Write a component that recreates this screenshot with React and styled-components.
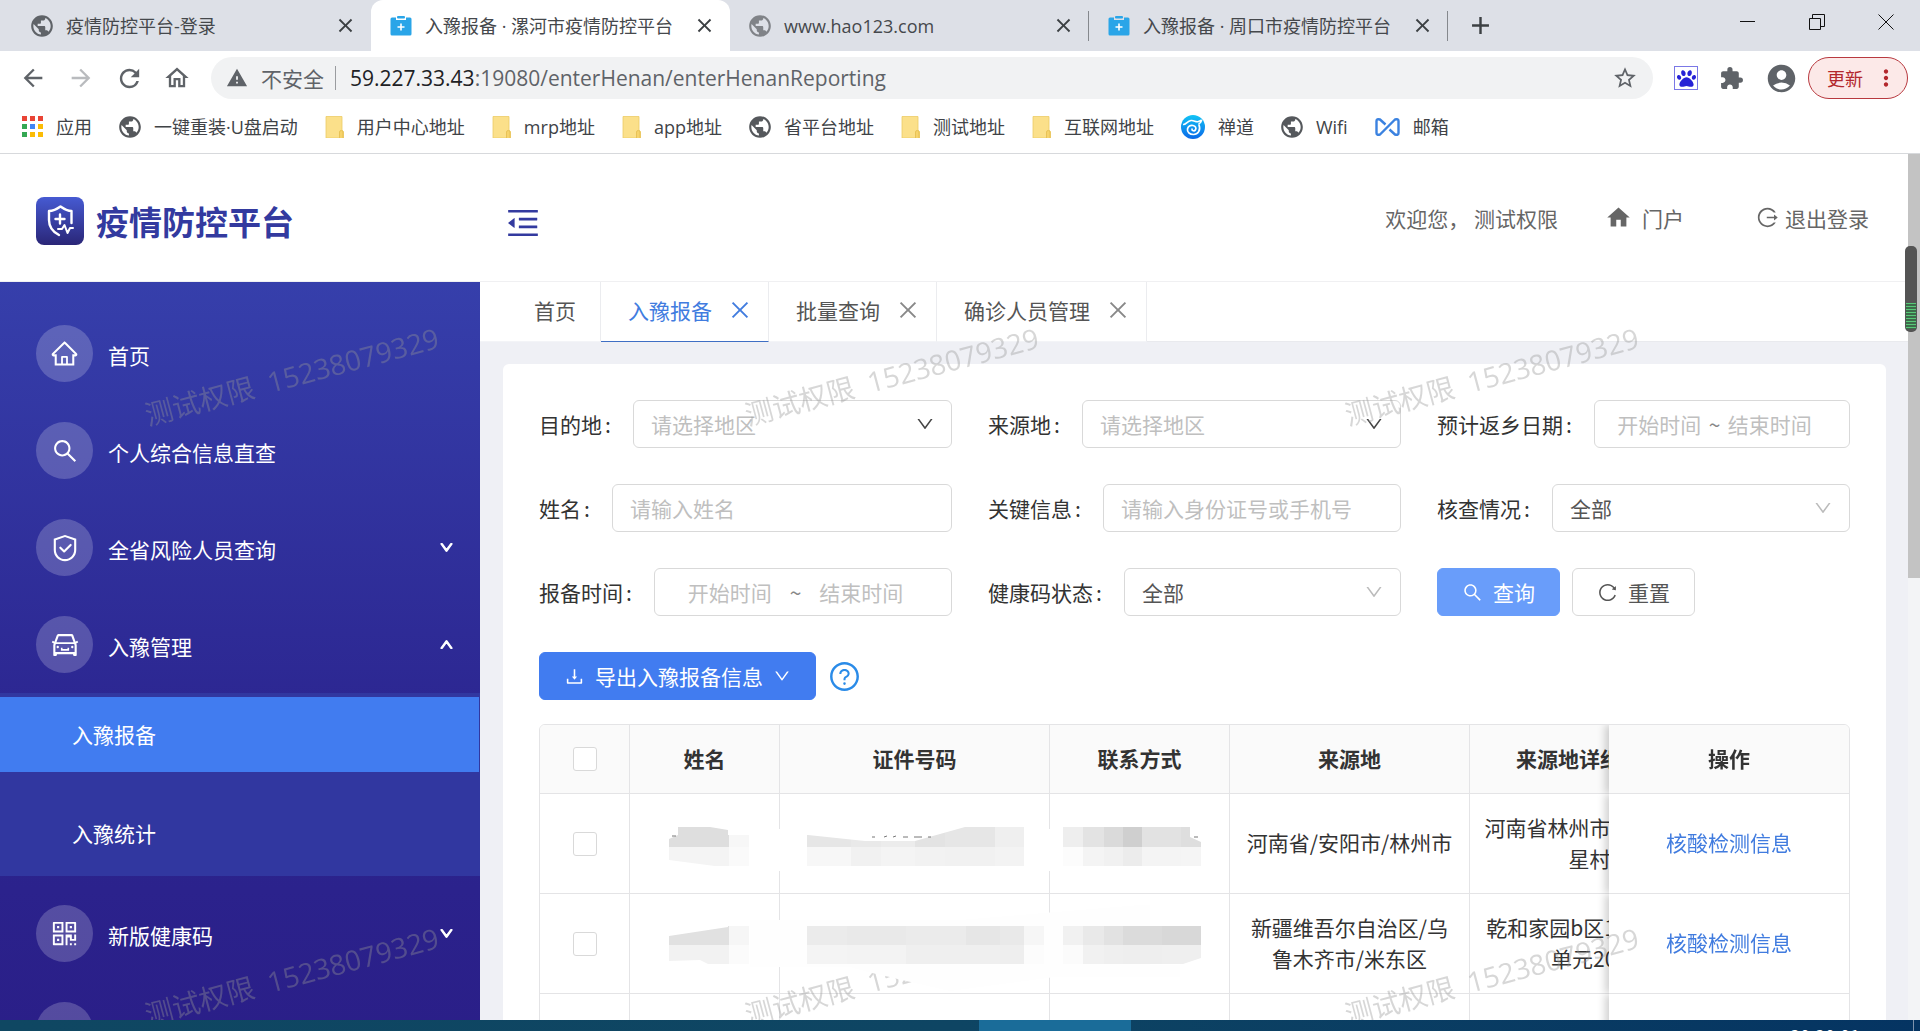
import styled, { createGlobalStyle } from 'styled-components';
import {
    MdArrowBack, MdArrowForward, MdRefresh, MdOutlineHome, MdWarning, MdStarBorder,
    MdExtension, MdAccountCircle, MdMoreVert, MdPublic, MdClose, MdAdd, MdHome,
} from 'react-icons/md';
import { FaPaw } from 'react-icons/fa';
import {
    AiOutlineHome, AiOutlineSearch, AiOutlineSafety, AiOutlineCar, AiOutlineQrcode,
    AiOutlineMenuFold, AiOutlineLogout, AiOutlineClose, AiOutlineDown, AiOutlineUp,
    AiOutlineReload, AiOutlineDownload, AiOutlineQuestionCircle, AiOutlineIdcard,
} from 'react-icons/ai';

const GlobalStyle = createGlobalStyle`
* {
    box-sizing: border-box;
}

body {
    margin: 0;
    color: #333;
    font-family: "Noto Sans CJK SC", "Noto Sans", sans-serif;
    font-size: 21px;
}

button, input, select {
    font: inherit;
    color: inherit;
}

button {
    display: flex;
    align-items: center;
    padding: 0;
    border: 0;
    background: none;
    cursor: pointer;
}

a {
    color: inherit;
    text-decoration: none;
}

svg {
    flex-shrink: 0;
}
`

const Screen = styled.div`
    display: flex;
    flex-direction: column;
    height: 100vh;
    overflow: hidden;
`

/* browser */

const TabStrip = styled.div`
    display: flex;
    align-items: stretch;
    height: 51px;
    flex-shrink: 0;
    padding-left: 12px;
    background: #dde0e7;
    font-family: "Open Sans", "Noto Sans CJK SC", sans-serif;
    font-size: 18px;
    line-height: 26px;
    color: #45484c;
`

const BrowserTab = styled.div`
    position: relative;
    display: flex;
    align-items: center;
    gap: 13px;
    width: 359px;
    padding: 0 14px 0 19px;
    background: ${props => props.$active ? '#fff' : 'transparent'};
    border-radius: 12px 12px 0 0;

span {
    flex: 1;
    white-space: nowrap;
}

&::after {
    content: '';
    position: absolute;
    right: 0;
    top: 11px;
    height: 30px;
    width: ${props => props.$divider ? '1px' : '0'};
    background: #85888d;
}
`

const TabClose = styled.button`
    color: #3c4043;
`

const NewTab = styled.button`
    padding: 0 0 1px 18px;
    color: #3c4043;
`

const WindowButtons = styled.div`
    display: flex;
    gap: 53px;
    margin-left: auto;
    padding: 0 26px 8px 0;
    color: #111;
`

const Toolbar = styled.div`
    display: flex;
    align-items: center;
    height: 54px;
    flex-shrink: 0;
    padding: 0 12px 0 19px;
    background: #fff;
    color: #5f6368;
`

const NavButton = styled.button`
    width: 48px;
    color: ${props => props.$faded ? '#b9bbbe' : '#5f6368'};
`

const Omnibox = styled.div`
    display: flex;
    align-items: center;
    flex: 1;
    height: 42px;
    padding: 0 15px;
    border-radius: 21px;
    background: #f1f2f3;
`

const Insecure = styled.span`
    margin: 0 11px 0 13px;
    line-height: 30px;
`

const Address = styled.div`
    flex: 1;
    padding-left: 14px;
    border-left: 1px solid #9a9c9f;
    font-family: "Open Sans", "Noto Sans", sans-serif;
    font-size: 21px;
    line-height: 24px;

b {
    font-weight: 400;
    color: #202124;
}
`

const Extensions = styled.div`
    display: flex;
    align-items: center;
    gap: 21px;
    padding: 0 10px 0 21px;
`

const PawBox = styled.button`
    justify-content: center;
    width: 24px;
    height: 24px;
    border: 1px solid #7b78e6;
    color: #2622d6;
`

const Update = styled.button`
    justify-content: space-between;
    width: 100px;
    height: 42px;
    padding: 0 8px 0 18px;
    border: 1px solid #b8393f;
    border-radius: 21px;
    background: #fce9e8;
    color: #b3282d;
    font-size: 18px;
`

const Bookmarks = styled.nav`
    display: flex;
    align-items: center;
    gap: 27px;
    height: 49px;
    flex-shrink: 0;
    padding: 0 22px 5px;
    border-bottom: 1px solid #d7d9dc;
    background: #fff;
    color: #404347;
    font-family: "Open Sans", "Noto Sans CJK SC", sans-serif;
    font-size: 18px;
    line-height: 26px;

a {
    display: flex;
    align-items: center;
    gap: 13px;
    white-space: nowrap;
}
`

const Globe = styled(MdPublic)`
    margin: 0 -2px;
`

/* page */

const Viewport = styled.div`
    position: relative;
    display: flex;
    flex: 1;
    min-height: 0;
    overflow: hidden;
    background: #fff;
`

const Page = styled.div`
    flex: 1;
    min-width: 0;
`

const Scrollbar = styled.div`
    width: 12px;
    background: #f3f4f6;

&::before {
    content: '';
    display: block;
    height: 424px;
    background: #c3c3c3;
}
`

const Header = styled.header`
    display: flex;
    align-items: center;
    height: 128px;
    padding-right: 39px;
    border-bottom: 1px solid #f0f0f2;
    color: #666;
`

const Brand = styled.div`
    display: flex;
    align-items: center;
    gap: 12px;
    width: 504px;
    padding: 6px 0 0 36px;

h1 {
    margin: 0;
    font-size: 33px;
    line-height: 48px;
    color: #333a9f;
}
`

const FoldButton = styled.button`
    padding-top: 10px;
    color: #333a9f;
`

const UserArea = styled.div`
    display: flex;
    align-items: center;
    margin-left: auto;
    white-space: pre;
`

const HeaderLink = styled.a`
    display: flex;
    align-items: center;
    gap: ${props => props.$gap};
    margin-left: ${props => props.$left};
`

const Body = styled.div`
    display: flex;
    height: 100%;
`

const Sidebar = styled.aside`
    width: 480px;
    flex-shrink: 0;
    height: 780px;
    padding-top: 23px;
    background: linear-gradient(#363fab, #2c2691 56%, #2a1e87);
    color: #fff;
`

const MenuItem = styled.button`
    width: 100%;
    height: 97px;
    padding: 0 26px 0 36px;
    gap: 15px;
    text-align: left;

span {
    flex: 1;
    padding-top: 3px;
}
`

const MenuIcon = styled.i`
    display: flex;
    align-items: center;
    justify-content: center;
    width: 57px;
    height: 57px;
    border-radius: 50%;
    background: rgba(255, 255, 255, 0.2);
`

const SubMenu = styled.div`
    display: flex;
    flex-direction: column;
    gap: 24px;
    margin-bottom: 9px;
    padding: 4px 1px 5px 0;
    background: #3137a0;
`

const SubItem = styled.a`
    height: 75px;
    padding-left: 72px;
    line-height: 74px;
    background: ${props => props.$active ? '#417cf0' : 'transparent'};
`

const Content = styled.main`
    flex: 1;
    min-width: 0;
    background: #eff0f5;
`

const PageTabs = styled.nav`
    display: flex;
    height: 60px;
    background: #fff;
    border-bottom: 1px solid #e9eaee;
`

const PageTab = styled.div`
    display: flex;
    align-items: center;
    gap: 16px;
    height: 60px;
    padding: ${props => props.$home ? '0 24px 3px 54px' : '0 16px 3px 27px'};
    border-right: 1px solid #ebecef;
    border-bottom: 1px solid ${props => props.$active ? '#3f6fc4' : '#f3f4f7'};
    color: ${props => props.$active ? '#417cdf' : '#555'};

button {
    color: ${props => props.$active ? '#417cdf' : '#888'};
}
`

const Card = styled.section`
    margin: 22px 22px 0 23px;
    padding: 36px;
    border-radius: 6px;
    background: #fff;
    min-height: 720px;
`

const Filters = styled.form`
    display: grid;
    grid-template-columns: repeat(3, 1fr);
    gap: 36px;
`

const Field = styled.div`
    display: flex;
    align-items: center;
    height: 48px;
    min-width: 0;

label {
    flex-shrink: 0;
    color: #333;
}
`

const Colon = styled.span`
    display: inline-block;
    width: 31px;
    padding-left: 3px;
`

const TextInput = styled.input`
    flex: 1;
    min-width: 0;
    height: 48px;
    padding: 0 17px;
    border: 1px solid #d9d9d9;
    border-radius: 6px;
    background: #fff;

&::placeholder {
    color: #bfbfbf;
    opacity: 1;
}
`

const SelectBox = styled.div`
    display: flex;
    align-items: center;
    flex: 1;
    min-width: 0;
    height: 48px;
    padding-right: 16px;
    border: 1px solid #d9d9d9;
    border-radius: 6px;
    color: ${props => props.$dark ? '#444' : '#bbb'};

select {
    flex: 1;
    height: 46px;
    padding: 0 0 0 17px;
    border: 0;
    appearance: none;
    background: none;
    color: ${props => props.$dark ? '#bfbfbf' : '#555'};
}
`

const RangeBox = styled.div`
    display: flex;
    align-items: center;
    flex: 1;
    min-width: 0;
    height: 48px;
    padding: 0 34px 0 19px;
    border: 1px solid #d9d9d9;
    border-radius: 6px;

span {
    width: 20px;
    text-align: center;
    color: #888;
}

input {
    flex: 1;
    min-width: 0;
    padding: 0;
    border: 0;
    text-align: center;
}

input::placeholder {
    color: #bfbfbf;
    opacity: 1;
}
`

const Button = styled.button`
    height: 48px;
    gap: 10px;
    padding: 0 24px;
    margin-right: 12px;
    border: 1px solid ${props => props.$bg ? props.$bg : '#d9d9d9'};
    border-radius: 6px;
    background: ${props => props.$bg || '#fff'};
    color: ${props => props.$bg ? '#fff' : '#555'};
    white-space: nowrap;
`

const Actions = styled.div`
    display: flex;
    align-items: center;
    margin: 36px 0 24px;
`

const HelpButton = styled.button`
    color: #2a8be8;
`

const TableWrap = styled.div`
    position: relative;
    overflow: hidden;
    border: 1px solid #e4e4e6;
    border-radius: 6px 6px 0 0;
`

const Table = styled.table`
    table-layout: fixed;
    width: 1410px;
    border-collapse: separate;
    border-spacing: 0;
    line-height: 31px;

th, td {
    height: 100px;
    padding: 0 14px 2px;
    border-right: 1px solid #e4e4e6;
    border-bottom: 1px solid #e4e4e6;
    background: #fff;
    text-align: center;
}

th {
    height: 69px;
    background: #fafafa;
    font-weight: 700;
}

th:last-child, td:last-child {
    position: sticky;
    right: 0;
    border-right: 0;
    box-shadow: -4px 0 8px rgba(0, 0, 0, 0.18);
    clip-path: inset(0 0 0 -12px);
}

td a {
    color: #417cdf;
}
`

const Check = styled.input`
    display: block;
    width: 24px;
    height: 24px;
    margin: 2px auto 0;
    appearance: none;
    border: 1px solid #d9d9d9;
    border-radius: 3px;
    background: #fff;
`

const Smudges = styled.svg`
    position: absolute;
    left: 120px;
    top: 90px;
    z-index: 2;
`

const Watermarks = styled.div`
    position: absolute;
    inset: -79px 12px 0 -9px;
    z-index: 1;
    display: grid;
    grid-template-columns: repeat(auto-fill, 600px);
    grid-auto-rows: 600px;
    place-items: center;
    overflow: hidden;
    pointer-events: none;
    color: rgba(150, 150, 150, 0.38);
    font-family: "Open Sans", "Noto Sans CJK SC", sans-serif;
    font-size: 28px;

span {
    transform: rotate(-15deg);
    white-space: pre;
}
`

const Meter = styled.div`
    position: absolute;
    right: 3px;
    top: 92px;
    width: 12px;
    height: 86px;
    padding: 57px 1px 3px;
    border-radius: 5px;
    background: #545454;

&::before {
    content: '';
    display: block;
    height: 100%;
    background: repeating-linear-gradient(#58c878 0 1px, #3d6b4a 1px 3px);
}
`

const Taskbar = styled.footer`
    display: flex;
    justify-content: flex-end;
    height: 11px;
    flex-shrink: 0;
    overflow: hidden;
    background: linear-gradient(90deg, #0f4762, #0e4563 50%, #053462);
    color: #fff;
    font-size: 18px;
    line-height: 26px;

span {
    padding: 2px 53px 0 0;
}

i {
    width: 1px;
    margin-right: 6px;
    background: #7e93ad;
}
`

const TaskWindow = styled.div`
    width: 152px;
    margin-right: auto;
    margin-left: 51%;
    background: #1a6c99;
`

const ClipboardIcon = () => (
    <svg width="22" height="20" viewBox="0 0 22 20">
        <path d="M2 1.5h4v2.5h10V1.5h4a1.5 1.5 0 0 1 1.5 1.5v15a1.5 1.5 0 0 1-1.5 1.5H2A1.5 1.5 0 0 1 .5 18V3A1.5 1.5 0 0 1 2 1.5z" fill="#2aa5e8" />
        <rect x="7" y="0" width="8" height="2.6" rx="1" fill="#2aa5e8" />
        <path d="M11 7.5v7M7.5 11h7" stroke="#fff" strokeWidth="1.6" />
    </svg>
)

const AppsIcon = () => {
    const colors = ['#e94435', '#e94435', '#e94435', '#34a853', '#4285f4', '#fbbc05', '#34a853', '#fbbc05', '#fbbc05']
    return (
        <svg width="21" height="21" viewBox="0 0 21 21">
            {colors.map((color, i) => (
                <rect key={i} x={(i % 3) * 8} y={Math.floor(i / 3) * 8} width="5" height="5" fill={color} />
            ))}
        </svg>
    )
}

const FolderIcon = () => (
    <svg width="19" height="22" viewBox="0 0 19 22">
        <path d="M1 .5h16V14l1.5 1.5V22H1z" fill="#fbe08a" stroke="#eccb66" strokeWidth=".8" />
        <path d="M14.5 22v-6q0-1.5 1.7-1.5t1.8 1.5v6" fill="#f6d36b" stroke="#e3bb4d" strokeWidth=".8" />
    </svg>
)

const ZentaoIcon = () => (
    <svg width="24" height="24" viewBox="0 0 24 24">
        <defs>
            <linearGradient id="zentao" x1="0" y1="0" x2="0" y2="1">
                <stop offset="0" stopColor="#12c4f5" />
                <stop offset="1" stopColor="#0b68e8" />
            </linearGradient>
        </defs>
        <circle cx="12" cy="12" r="12" fill="url(#zentao)" />
        <path d="M2 9.500c3 .5 4-3.500 8-4 3.500-.4 4.500 2 7.500 1 1.500-.5 2-1.500 3-1-.5 2-1.500 3-3 3.500" fill="none" stroke="#fff" strokeWidth="1.600" />
        <path d="M18 10c2 5-1 9.500-5.500 9.500-4 0-6.500-2.500-6-5.500.5-2.800 3-4 5.500-3.500s3.500 2.500 2.500 4.200-3.500 1.300-3.500-.5" fill="none" stroke="#fff" strokeWidth="1.700" strokeLinecap="round" />
    </svg>
)

const MailIcon = () => (
    <svg width="25" height="18" viewBox="0 0 25 18" fill="none" stroke="#3b82e0" strokeWidth="2.4" strokeLinejoin="round">
        <path d="M10.500 6.500 5 1.500Q1.500.5 1.500 3v12q0 2.500 3.500 1.500L20 1.500Q23.500.5 23.500 3v12q0 2.500-3.500 1.500l-5.500-5" />
    </svg>
)

const LogoIcon = () => (
    <svg width="48" height="48" viewBox="0 0 48 48">
        <defs>
            <linearGradient id="logo" x1="0" y1="0" x2="0" y2="1">
                <stop offset="0" stopColor="#465ad2" />
                <stop offset="1" stopColor="#2a2677" />
            </linearGradient>
        </defs>
        <rect width="48" height="48" rx="8" fill="url(#logo)" />
        <g fill="none" stroke="#fff" strokeWidth="2.400" strokeLinejoin="round" strokeLinecap="round">
            <path d="M23 38c-6-3-10-8-10-15v-9c4 0 8-2 11.500-4.500C28 12 31 14 35.500 14v12" />
            <path d="M24 17.500v9M19.500 22h9" />
            <path d="M22 32h4l2.500-4 3 8 2.500-5h3" strokeWidth="2" />
        </g>
    </svg>
)

// blurred-out personal data in the first two rows
const greys = {
    first: [
        [0, 60, '#dedede', '#f4f4f4'], [60, 20, '#f7f7f7', '#fafafa'],
        [138, 44, '#e6e6e6', '#f7f7f7'], [182, 30, '#e9e9e9', '#f1f1f1'], [212, 34, '#ececec', '#f4f4f4'],
        [246, 30, '#e3e3e3', '#f2f2f2'], [276, 50, '#e6e6e6', '#f1f1f1'], [326, 29, '#efefef', '#f3f3f3'],
        [394, 20, '#eeeeee', '#fcfcfc'], [414, 21, '#e3e3e3', '#f4f4f4'], [435, 19, '#dadada', '#f1f1f1'],
        [454, 19, '#cfcfcf', '#ececec'], [473, 39, '#e2e2e2', '#f4f4f4'], [512, 20, '#dedede', '#f5f5f5'],
    ],
    second: [
        [0, 60, '#e1e1e1', '#f2f2f2'], [60, 20, '#f6f6f6', '#fbfbfb'],
        [138, 40, '#ebebeb', '#f4f4f4'], [178, 59, '#e9e9e9', '#f3f3f3'], [237, 60, '#ebebeb', '#efefef'],
        [297, 34, '#e6e6e6', '#efefef'], [331, 24, '#e9e9e9', '#eeeeee'], [355, 20, '#f6f6f6', '#fcfcfc'],
        [394, 20, '#f1f1f1', '#fbfbfb'], [414, 21, '#e9e9e9', '#f1f1f1'], [435, 19, '#e2e2e2', '#efefef'],
        [454, 39, '#dbdbdb', '#eeeeee'], [493, 39, '#d8d8d8', '#efefef'],
    ],
}

function Redacted() {
    return (
        <Smudges width="550" height="200" viewBox="0 0 550 200">
            <path d="M8 14h520v42H8z" fill="#fff" />
            <path d="M90 105H300L480 90h10v60h30v12H395L290 176L212 158L190 152H90z" fill="#fefefe" />
            <clipPath id="smudgeA">
                <path d="M18 12H50L68 15V20H148L205 26H255L305 12H530V22L541 27V53H400 70L9 45V24L18 20z" />
            </clipPath>
            <g clipPath="url(#smudgeA)">
                {greys.first.map(([x, w, top, bottom]) => (
                    <g key={x}>
                        <rect x={x + 9} y="12" width={w} height="20" fill={top} />
                        <rect x={x + 9} y="32" width={w} height="19" fill={bottom} />
                    </g>
                ))}
            </g>
            <path d="M212 22h3M224 22l3-1M233 22l3-1M243 22h5M254 22h8M268 22h3M12 21h4M534 22h4" stroke="#777" strokeWidth="1" />
            <clipPath id="smudgeB">
                <path d="M9 121 68 112V111H541V143L520 150H50L40 145 9 146z" />
            </clipPath>
            <g clipPath="url(#smudgeB)">
                {greys.second.map(([x, w, top, bottom]) => (
                    <g key={x}>
                        <rect x={x + 9} y="111" width={w} height="19" fill={top} />
                        <rect x={x + 9} y="130" width={w} height="19" fill={bottom} />
                    </g>
                ))}
            </g>
        </Smudges>
    )
}

const browserTabs = [
    { title: '疫情防控平台-登录', icon: <Globe size={26} color="#5f6368" /> },
    { title: '入豫报备 · 漯河市疫情防控平台', icon: <ClipboardIcon />, active: true },
    { title: 'www.hao123.com', icon: <Globe size={26} color="#808388" />, divider: true },
    { title: '入豫报备 · 周口市疫情防控平台', icon: <ClipboardIcon />, divider: true },
]

const bookmarks = [
    ['应用', AppsIcon],
    ['一键重装·U盘启动', 'globe'],
    ['用户中心地址', FolderIcon],
    ['mrp地址', FolderIcon],
    ['app地址', FolderIcon],
    ['省平台地址', 'globe'],
    ['测试地址', FolderIcon],
    ['互联网地址', FolderIcon],
    ['禅道', ZentaoIcon],
    ['Wifi', 'globe'],
    ['邮箱', MailIcon],
]

function Browser() {
    return (
        <>
            <TabStrip>
                {browserTabs.map(tab => (
                    <BrowserTab key={tab.title} $active={tab.active} $divider={tab.divider}>
                        {tab.icon}
                        <span>{tab.title}</span>
                        <TabClose aria-label="关闭标签页"><MdClose size={23} /></TabClose>
                    </BrowserTab>
                ))}
                <NewTab aria-label="新标签页"><MdAdd size={29} /></NewTab>
                <WindowButtons>
                    <button aria-label="最小化">
                        <svg width="16" height="16" stroke="currentColor"><path d="M0 7.500h15" /></svg>
                    </button>
                    <button aria-label="还原">
                        <svg width="16" height="16" stroke="currentColor" fill="none"><path d="M.5 4.500h11v11H.5zM3.500 4.500v-4h12v12h-4" /></svg>
                    </button>
                    <button aria-label="关闭">
                        <svg width="16" height="16" stroke="currentColor"><path d="M.5.5l15 15M15.500.5l-15 15" /></svg>
                    </button>
                </WindowButtons>
            </TabStrip>
            <Toolbar>
                <NavButton aria-label="后退"><MdArrowBack size={28} /></NavButton>
                <NavButton aria-label="前进" $faded><MdArrowForward size={28} /></NavButton>
                <NavButton aria-label="刷新"><MdRefresh size={29} /></NavButton>
                <NavButton aria-label="主页"><MdOutlineHome size={28} /></NavButton>
                <Omnibox>
                    <MdWarning size={22} />
                    <Insecure>不安全</Insecure>
                    <Address role="textbox" aria-label="地址"><b>59.227.33.43</b>:19080/enterHenan/enterHenanReporting</Address>
                    <button aria-label="收藏"><MdStarBorder size={26} /></button>
                </Omnibox>
                <Extensions>
                    <PawBox aria-label="百度"><FaPaw size={19} /></PawBox>
                    <MdExtension size={25} />
                    <MdAccountCircle size={33} />
                </Extensions>
                <Update>更新<MdMoreVert size={26} /></Update>
            </Toolbar>
            <Bookmarks>
                {bookmarks.map(([name, Icon]) => (
                    <a href="#" key={name}>
                        {Icon === 'globe' ? <Globe size={26} color="#55585c" /> : <Icon />}
                        {name}
                    </a>
                ))}
            </Bookmarks>
        </>
    )
}

function Menu() {
    return (
        <Sidebar>
            <MenuItem><MenuIcon><AiOutlineHome size={29} /></MenuIcon><span>首页</span></MenuItem>
            <MenuItem><MenuIcon><AiOutlineSearch size={28} /></MenuIcon><span>个人综合信息直查</span></MenuItem>
            <MenuItem><MenuIcon><AiOutlineSafety size={30} /></MenuIcon><span>全省风险人员查询</span><AiOutlineDown size={15} strokeWidth={90} /></MenuItem>
            <MenuItem><MenuIcon><AiOutlineCar size={30} /></MenuIcon><span>入豫管理</span><AiOutlineUp size={15} strokeWidth={90} /></MenuItem>
            <SubMenu>
                <SubItem href="#" $active>入豫报备</SubItem>
                <SubItem href="#">入豫统计</SubItem>
            </SubMenu>
            <MenuItem><MenuIcon><AiOutlineQrcode size={31} /></MenuIcon><span>新版健康码</span><AiOutlineDown size={15} strokeWidth={90} /></MenuItem>
            <MenuItem aria-label="更多"><MenuIcon><AiOutlineIdcard size={28} /></MenuIcon></MenuItem>
        </Sidebar>
    )
}

function Label({ id, children }) {
    return <label htmlFor={id}>{children}<Colon>:</Colon></label>
}

function Select({ id, label, value, dark }) {
    return (
        <Field>
            <Label id={id}>{label}</Label>
            <SelectBox $dark={dark}>
                <select id={id}><option>{value}</option></select>
                <AiOutlineDown size={20} />
            </SelectBox>
        </Field>
    )
}

function Range({ id, label }) {
    return (
        <Field>
            <Label id={id}>{label}</Label>
            <RangeBox>
                <input id={id} placeholder="开始时间" />
                <span>~</span>
                <input aria-label={label + '结束'} placeholder="结束时间" />
            </RangeBox>
        </Field>
    )
}

function Text({ id, label, placeholder }) {
    return (
        <Field>
            <Label id={id}>{label}</Label>
            <TextInput id={id} placeholder={placeholder} />
        </Field>
    )
}

const rows = [
    { from: '河南省/安阳市/林州市', detail: '河南省林州市临淇镇七星村' },
    { from: '新疆维吾尔自治区/乌鲁木齐市/米东区', detail: '乾和家园b区12号楼12单元201' },
    { from: '', detail: '' },
]

function Report() {
    return (
        <Card>
            <Filters onSubmit={e => e.preventDefault()}>
                <Select id="target" label="目的地" value="请选择地区" dark />
                <Select id="source" label="来源地" value="请选择地区" dark />
                <Range id="back" label="预计返乡日期" />
                <Text id="name" label="姓名" placeholder="请输入姓名" />
                <Text id="key" label="关键信息" placeholder="请输入身份证号或手机号" />
                <Select id="check" label="核查情况" value="全部" />
                <Range id="time" label="报备时间" />
                <Select id="health" label="健康码状态" value="全部" />
                <Field>
                    <Button $bg="#699dfa"><AiOutlineSearch size={21} />查询</Button>
                    <Button type="reset"><AiOutlineReload size={21} />重置</Button>
                </Field>
            </Filters>
            <Actions>
                <Button $bg="#417cf0"><AiOutlineDownload size={21} />导出入豫报备信息<AiOutlineDown size={18} /></Button>
                <HelpButton aria-label="帮助"><AiOutlineQuestionCircle size={33} /></HelpButton>
            </Actions>
            <TableWrap>
                <Table>
                    <colgroup>
                        <col width="90" />
                        <col width="150" />
                        <col width="270" />
                        <col width="180" />
                        <col width="240" />
                        <col width="240" />
                        <col width="240" />
                    </colgroup>
                    <thead>
                        <tr>
                            <th><Check type="checkbox" aria-label="全选" /></th>
                            <th>姓名</th>
                            <th>证件号码</th>
                            <th>联系方式</th>
                            <th>来源地</th>
                            <th>来源地详细地址</th>
                            <th>操作</th>
                        </tr>
                    </thead>
                    <tbody>
                        {rows.map((row, i) => (
                            <tr key={i}>
                                <td><Check type="checkbox" aria-label="选择" /></td>
                                <td></td>
                                <td></td>
                                <td></td>
                                <td>{row.from}</td>
                                <td>{row.detail}</td>
                                <td>{row.from && <a href="#">核酸检测信息</a>}</td>
                            </tr>
                        ))}
                    </tbody>
                </Table>
                <Redacted />
            </TableWrap>
        </Card>
    )
}

export default function App() {
    return (
        <Screen>
            <GlobalStyle />
            <Browser />
            <Viewport>
                <Page>
                    <Header>
                        <Brand>
                            <LogoIcon />
                            <h1>疫情防控平台</h1>
                        </Brand>
                        <FoldButton aria-label="收起菜单"><AiOutlineMenuFold size={38} /></FoldButton>
                        <UserArea>
                            欢迎您， 测试权限
                            <HeaderLink href="#" $gap="10px" $left="47px"><MdHome size={27} />门户</HeaderLink>
                            <HeaderLink href="#" $gap="6px" $left="72px"><AiOutlineLogout size={23} />退出登录</HeaderLink>
                        </UserArea>
                    </Header>
                    <Body>
                        <Menu />
                        <Content>
                            <PageTabs>
                                <PageTab $home>首页</PageTab>
                                <PageTab $active>入豫报备<button aria-label="关闭"><AiOutlineClose size={24} /></button></PageTab>
                                <PageTab>批量查询<button aria-label="关闭"><AiOutlineClose size={24} /></button></PageTab>
                                <PageTab>确诊人员管理<button aria-label="关闭"><AiOutlineClose size={24} /></button></PageTab>
                            </PageTabs>
                            <Report />
                        </Content>
                    </Body>
                </Page>
                <Scrollbar />
                <Watermarks>
                    {[0, 1, 2, 3, 4, 5].map(i => <span key={i}>测试权限  15238079329</span>)}
                </Watermarks>
                <Meter />
            </Viewport>
            <Taskbar>
                <TaskWindow />
                <span>20:20:01</span>
                <i />
            </Taskbar>
        </Screen>
    )
}
